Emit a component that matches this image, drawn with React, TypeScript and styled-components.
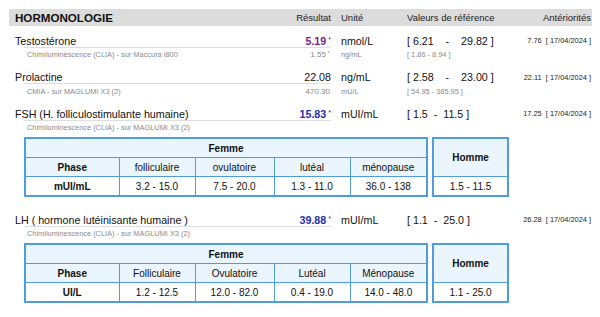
import React from "react";
import styled, { createGlobalStyle } from "styled-components";

const GlobalStyle = createGlobalStyle`
  html, body { margin: 0; padding: 0; background: #fff; }
  body { font-family: "Liberation Sans", Arial, Helvetica, sans-serif; color: #111; }
`;

const BLUE = "#4f9ddd";

const Page = styled.div`
  width: 600px;
  height: 317px;
  box-sizing: border-box;
  padding: 9px 8px 0 9px;
  overflow: hidden;
`;

const Grid = styled.div`
  display: grid;
  grid-template-columns: 316px 56px 1fr auto;
  column-gap: 10px;
  align-items: center;
  padding: 0 1px 0 6px;
`;

const HeaderBar = styled(Grid)`
  height: 17px;
  background: #dcdcdc;
  font-size: 9.5px;
  color: #222;
`;

const Title = styled.div`
  display: flex;
  justify-content: space-between;
  align-items: center;
`;

const TitleText = styled.span`
  font-size: 11.6px;
  font-weight: bold;
  color: #111;
`;

const HeaderAnt = styled.span`
  justify-self: end;
`;

const Block = styled.section<{ $first?: boolean; $hasTable?: boolean }>`
  margin-top: ${(p) => (p.$first ? 7 : 0)}px;
  margin-bottom: ${(p) => (p.$hasTable ? 15 : 8.5)}px;
`;

const MainRow = styled(Grid)`
  height: 15px;
  font-size: 10.7px;
`;

const NameCell = styled.div`
  position: relative;
  display: flex;
  justify-content: space-between;
  align-items: center;
  height: 15px;
  &::after {
    content: "";
    position: absolute;
    left: 9px;
    right: 0;
    bottom: 0.5px;
    height: 1px;
    background: #dedede;
  }
`;

const Result = styled.span<{ $color: string; $bold?: boolean }>`
  color: ${(p) => p.$color};
  font-weight: ${(p) => (p.$bold ? "bold" : "normal")};
  white-space: pre;
`;

const Star = styled.sup`
  font-size: 7px;
  vertical-align: 3px;
  margin-left: 2px;
  font-weight: normal;
`;

const Ref = styled.span`
  white-space: pre;
`;

const Ant = styled.span`
  font-size: 7.4px;
  color: #222;
  white-space: pre;
  justify-self: end;
`;

const SubRow = styled(Grid)`
  height: 13px;
  font-size: 7.4px;
  color: #8a8a8a;
`;

const SubName = styled.div`
  display: flex;
  justify-content: space-between;
  align-items: center;
  padding-left: 12px;
  padding-right: 1px;
`;

const SubResult = styled.span`
  font-size: 8px;
`;

const SubStar = styled.sup`
  font-size: 5.5px;
  vertical-align: 2px;
  margin-left: 2px;
`;

const Tables = styled.div`
  display: flex;
  gap: 4px;
  margin: 3px 0 0 15px;
  align-items: flex-start;
`;

const Table = styled.table<{ $w: number }>`
  border-collapse: collapse;
  table-layout: fixed;
  width: ${(p) => p.$w}px;
  border: 2px solid ${BLUE};
  font-size: 10px;
  color: #111;
`;

const Cell = styled.td<{ $head?: boolean; $bold?: boolean; $h?: number }>`
  border: 1px solid ${BLUE};
  background: ${(p) => (p.$head ? "#eaf5fd" : "#fff")};
  font-weight: ${(p) => (p.$bold ? "bold" : "normal")};
  text-align: center;
  padding: 0;
  height: ${(p) => p.$h ?? 18}px;
  white-space: nowrap;
`;

type RangeTable = {
  unit: string;
  phases: string[];
  values: string[];
  homme: string;
};

type Test = {
  name: string;
  result: string;
  flag?: boolean;
  color: string;
  bold?: boolean;
  unit: string;
  ref: string;
  ant: string;
  method: string;
  subResult?: string;
  subFlag?: boolean;
  subUnit?: string;
  subRef?: string;
  table?: RangeTable;
};

const tests: Test[] = [
  {
    name: "Testostérone",
    result: "5.19",
    flag: true,
    color: "#7d1b8f",
    bold: true,
    unit: "nmol/L",
    ref: "[ 6.21    -    29.82 ]",
    ant: "7.76  [ 17/04/2024 ]",
    method: "Chimiluminescence (CLIA) - sur Maccura i800",
    subResult: "1.55",
    subFlag: true,
    subUnit: "ng/mL",
    subRef: "[ 1.86 - 8.94 ]",
  },
  {
    name: "Prolactine",
    result: "22.08",
    color: "#111",
    unit: "ng/mL",
    ref: "[ 2.58    -    23.00 ]",
    ant: "22.11  [ 17/04/2024 ]",
    method: "CMIA - sur MAGLUMI X3 (2)",
    subResult: "470.30",
    subUnit: "mU/L",
    subRef: "[ 54.95 - 385.95 ]",
  },
  {
    name: "FSH (H. folliculostimulante humaine)",
    result: "15.83",
    flag: true,
    color: "#1f2fb3",
    bold: true,
    unit: "mUI/mL",
    ref: "[ 1.5  -  11.5 ]",
    ant: "17.25  [ 17/04/2024 ]",
    method: "Chimiluminescence (CLIA) - sur MAGLUMI X3 (2)",
    table: {
      unit: "mUI/mL",
      phases: ["folliculaire", "ovulatoire", "lutéal", "ménopause"],
      values: ["3.2 - 15.0", "7.5 - 20.0", "1.3 - 11.0", "36.0 - 138"],
      homme: "1.5 - 11.5",
    },
  },
  {
    name: "LH ( hormone lutéinisante humaine )",
    result: "39.88",
    flag: true,
    color: "#1f2fb3",
    bold: true,
    unit: "mUI/mL",
    ref: "[ 1.1  -  25.0 ]",
    ant: "26.28  [ 17/04/2024 ]",
    method: "Chimiluminescence (CLIA) - sur MAGLUMI X3 (2)",
    table: {
      unit: "UI/L",
      phases: ["Folliculaire", "Ovulatoire", "Lutéal", "Ménopause"],
      values: ["1.2 - 12.5", "12.0 - 82.0", "0.4 - 19.0", "14.0 - 48.0"],
      homme: "1.1 - 25.0",
    },
  },
];

const colWidths = [94, 76, 79, 76, 77];

function Ranges({ t }: { t: RangeTable }) {
  return (
    <Tables>
      <Table $w={404}>
        <colgroup>
          {colWidths.map((w, i) => (
            <col key={i} style={{ width: w }} />
          ))}
        </colgroup>
        <tbody>
          <tr>
            <Cell $head $bold colSpan={5}>
              Femme
            </Cell>
          </tr>
          <tr>
            <Cell $head $bold>
              Phase
            </Cell>
            {t.phases.map((p) => (
              <Cell $head key={p}>
                {p}
              </Cell>
            ))}
          </tr>
          <tr>
            <Cell $bold>{t.unit}</Cell>
            {t.values.map((v) => (
              <Cell key={v}>{v}</Cell>
            ))}
          </tr>
        </tbody>
      </Table>
      <Table $w={77}>
        <tbody>
          <tr>
            <Cell $head $bold $h={37}>
              Homme
            </Cell>
          </tr>
          <tr>
            <Cell>{t.homme}</Cell>
          </tr>
        </tbody>
      </Table>
    </Tables>
  );
}

export default function App() {
  return (
    <>
      <GlobalStyle />
      <Page>
        <HeaderBar>
          <Title>
            <TitleText>HORMONOLOGIE</TitleText>
            <span>Résultat</span>
          </Title>
          <span>Unité</span>
          <span>Valeurs de référence</span>
          <HeaderAnt>Antériorités</HeaderAnt>
        </HeaderBar>
        {tests.map((t, i) => (
          <Block key={t.name} $first={i === 0} $hasTable={!!t.table}>
            <MainRow>
              <NameCell>
                <span>{t.name}</span>
                <Result $color={t.color} $bold={t.bold}>
                  {t.result}
                  {t.flag && <Star>*</Star>}
                </Result>
              </NameCell>
              <span>{t.unit}</span>
              <Ref>{t.ref}</Ref>
              <Ant>{t.ant}</Ant>
            </MainRow>
            <SubRow>
              <SubName>
                <span>{t.method}</span>
                {t.subResult && (
                  <SubResult>
                    {t.subResult}
                    {t.subFlag && <SubStar>*</SubStar>}
                  </SubResult>
                )}
              </SubName>
              <span>{t.subUnit}</span>
              <Ref>{t.subRef}</Ref>
              <span />
            </SubRow>
            {t.table && <Ranges t={t.table} />}
          </Block>
        ))}
      </Page>
    </>
  );
}
